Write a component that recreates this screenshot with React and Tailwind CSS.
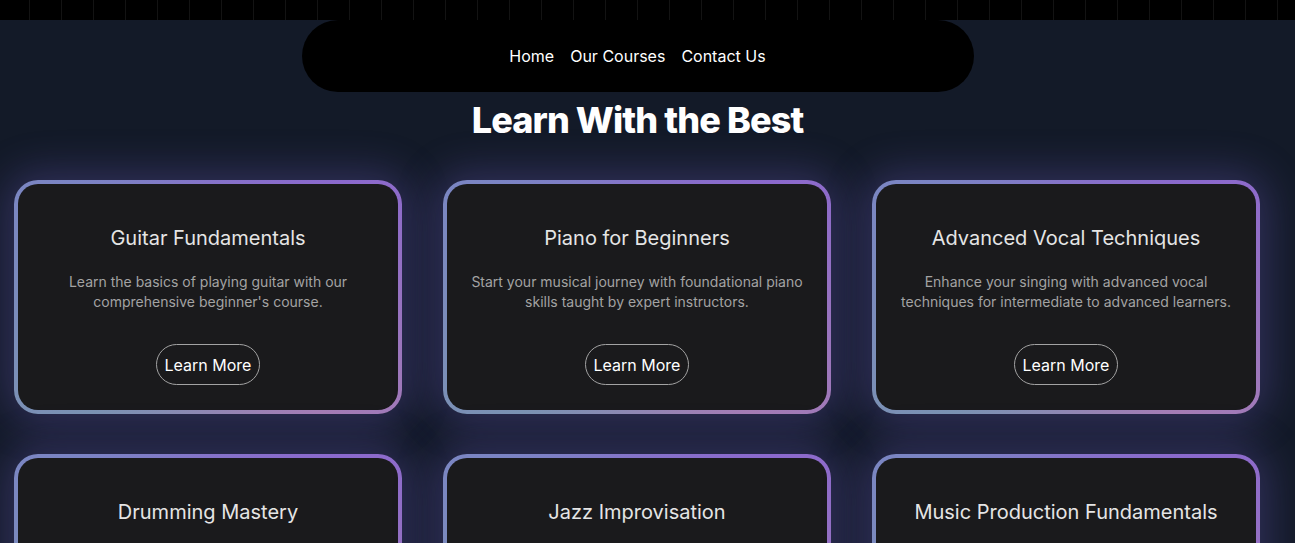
const courses = [
  {
    title: 'Guitar Fundamentals',
    description: "Learn the basics of playing guitar with our comprehensive beginner's course.",
  },
  {
    title: 'Piano for Beginners',
    description: 'Start your musical journey with foundational piano skills taught by expert instructors.',
  },
  {
    title: 'Advanced Vocal Techniques',
    description: 'Enhance your singing with advanced vocal techniques for intermediate to advanced learners.',
  },
  {
    title: 'Drumming Mastery',
    description: 'Master the drums with techniques ranging from basic rhythms to advanced fills.',
  },
  {
    title: 'Jazz Improvisation',
    description: 'Learn the art of jazz improvisation and develop your own musical voice.',
  },
  {
    title: 'Music Production Fundamentals',
    description: 'Discover the essentials of music production, from recording to mixing.',
  },
]

function CourseCard({ course }) {
  return (
    <div className="rounded-[24px] p-[4px] bg-[conic-gradient(from_0deg,#8573c9_0deg,#8b69cd_50deg,#a57db5_135deg,#7b93b3_225deg,#7b84c4_310deg,#8573c9_360deg)] shadow-[0_0_40px_8px_rgba(120,100,210,0.3)]">
      <div className="h-[226px] rounded-[20px] bg-[#1a1a1c] px-5 pt-10 pb-6 flex flex-col items-center text-center">
        <h3 className="text-xl leading-7 text-[#e5e5e5]">{course.title}</h3>
        <p className="mt-5 text-sm leading-5 text-[#a3a3a3]">{course.description}</p>
        <button className="mt-8 h-[41px] px-2 whitespace-nowrap rounded-full border border-[#a3a3a3] text-base text-white">
          Learn More
        </button>
      </div>
    </div>
  )
}

export default function App() {
  return (
    <div className="min-h-[543px] bg-[#131a28] font-['Inter',sans-serif] overflow-hidden">
      <div className="h-[20px] bg-black bg-[linear-gradient(to_right,#131313_1px,transparent_1px)] bg-[size:32px_100%] bg-[position:29px_0]" />
      <div className="w-[1275px]">
        <nav className="mx-auto w-[672px] h-[72px] rounded-full bg-black flex items-center justify-center gap-4">
          <a className="text-base text-white">Home</a>
          <a className="text-base text-white">Our Courses</a>
          <a className="text-base text-white">Contact Us</a>
        </nav>
        <h1 className="mt-2 text-center text-4xl leading-10 font-extrabold tracking-tight text-white">
          Learn With the Best
        </h1>
        <div className="mt-10 pl-[14px] pr-[15px] grid grid-cols-3 gap-x-[41px] gap-y-10">
          {courses.map((c, i) => (
            <CourseCard key={i} course={c} />
          ))}
        </div>
      </div>
    </div>
  )
}
